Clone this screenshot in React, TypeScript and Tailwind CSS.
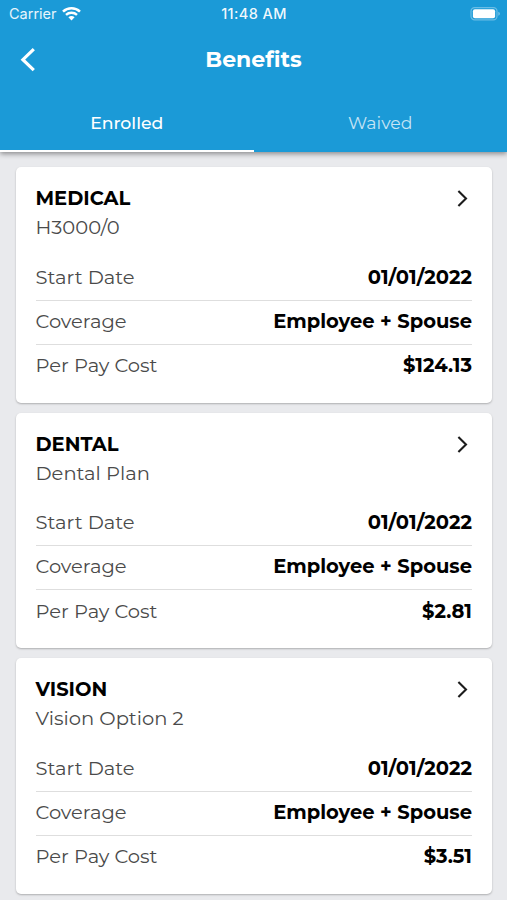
import { useState } from 'react';

interface Benefit {
  title: string;
  plan: string;
  startDate: string;
  coverage: string;
  cost: string;
}

const benefits: Benefit[] = [
  {
    title: 'MEDICAL',
    plan: 'H3000/0',
    startDate: '01/01/2022',
    coverage: 'Employee + Spouse',
    cost: '$124.13',
  },
  {
    title: 'DENTAL',
    plan: 'Dental Plan',
    startDate: '01/01/2022',
    coverage: 'Employee + Spouse',
    cost: '$2.81',
  },
  {
    title: 'VISION',
    plan: 'Vision Option 2',
    startDate: '01/01/2022',
    coverage: 'Employee + Spouse',
    cost: '$3.51',
  },
];

const tabs = ['Enrolled', 'Waived'];

const WifiIcon = () => (
  <svg className="ml-[5px] h-[14px] w-[19px]" viewBox="0 0 19 14" fill="none">
    <path d="M1 4.6C5.8 .2 13.2 .2 18 4.6" stroke="white" strokeWidth="2.6" />
    <path d="M4 7.9c3-2.8 8-2.8 11 0" stroke="white" strokeWidth="2.4" />
    <path d="M6.4 10.3c1.7-1.6 4.5-1.6 6.2 0l-3.1 3.1z" fill="white" />
  </svg>
);

const BatteryIcon = () => (
  <svg className="h-[14px] w-[31px]" viewBox="0 0 31 14" fill="none">
    <rect x="1" y="0.6" width="26" height="12.2" rx="3.6" stroke="white" strokeOpacity="0.35" strokeWidth="1.2" />
    <rect x="2.9" y="2.2" width="22.2" height="9" rx="2" fill="white" />
    <path d="M28.4 4.7c1.9.7 1.9 3.3 0 4z" fill="white" fillOpacity="0.45" />
  </svg>
);

const Row = ({ label, value }: { label: string; value: string }) => (
  <div className="flex h-[44px] items-center justify-between pb-[2.4px]">
    <dt className="text-[#4a4a4a]">{label}</dt>
    <dd className="font-bold text-black">{value}</dd>
  </div>
);

const BenefitCard = ({ benefit }: { benefit: Benefit }) => (
  <section className="h-[235.5px] rounded-[5px] bg-white pt-4 pr-5 pl-[19.5px] shadow-[0_1px_2px_rgba(0,0,0,0.26)]">
    <div className="flex h-[30px] items-center justify-between">
      <h2 className="font-bold text-black">{benefit.title}</h2>
      <svg className="mr-1 h-[18px] w-[11px]" viewBox="0 0 11 18" fill="none">
        <path d="M1.4 1.9L9 9.4L1.4 16.9" stroke="#1c1c1c" strokeWidth="2.1" />
      </svg>
    </div>
    <p className="h-[29px] leading-[29px] text-[#4a4a4a]">{benefit.plan}</p>
    <dl className="mt-[14.5px] divide-y divide-[#dedede]">
      <Row label="Start Date" value={benefit.startDate} />
      <Row label="Coverage" value={benefit.coverage} />
      <Row label="Per Pay Cost" value={benefit.cost} />
    </dl>
  </section>
);

export default function App() {
  const [activeTab, setActiveTab] = useState(0);

  return (
    <div className="flex h-[900px] w-full flex-col overflow-hidden bg-[#e9eaed] font-['Montserrat','Inter',sans-serif] text-[19.5px] leading-6">
      <header className="z-10 flex h-[152px] shrink-0 flex-col bg-[#1b9ad7] text-white shadow-[0_2px_5px_rgba(0,0,0,0.4)]">
        {/* Status bar */}
        <div className="grid h-[27px] grid-cols-3 items-center pr-2 pl-[9px] font-['Inter',sans-serif] text-[14.5px] leading-5">
          <div className="flex items-center text-white/90">
            <span>Carrier</span>
            <WifiIcon />
          </div>
          <span className="text-center font-medium tracking-[0.4px] text-white/95">11:48 AM</span>
          <div className="-mr-0.5 flex justify-end">
            <BatteryIcon />
          </div>
        </div>

        <div className="grid h-[65px] grid-cols-[60px_1fr_60px] items-center">
          <button className="pl-5" aria-label="Back">
            <svg className="h-6 w-4" viewBox="0 0 16 24" fill="none">
              <path d="M13.8 1.2L2.9 11.7L13.8 22.2" stroke="white" strokeWidth="3.2" />
            </svg>
          </button>
          <h1 className="text-center text-[22px] font-bold">Benefits</h1>
        </div>

        <nav className="grid flex-1 grid-cols-2">
          {tabs.map((tab, index) => (
            <button
              key={tab}
              onClick={() => setActiveTab(index)}
              className={`border-b-2 pt-1 text-[17.3px] ${
                index === activeTab ? 'border-white font-medium text-white' : 'border-transparent text-white/75'
              }`}
            >
              {tab}
            </button>
          ))}
        </nav>
      </header>

      <main className="flex flex-col gap-[10px] pt-[15px] pr-[15px] pl-4">
        {benefits.map((benefit) => (
          <BenefitCard key={benefit.title} benefit={benefit} />
        ))}
      </main>
    </div>
  );
}
